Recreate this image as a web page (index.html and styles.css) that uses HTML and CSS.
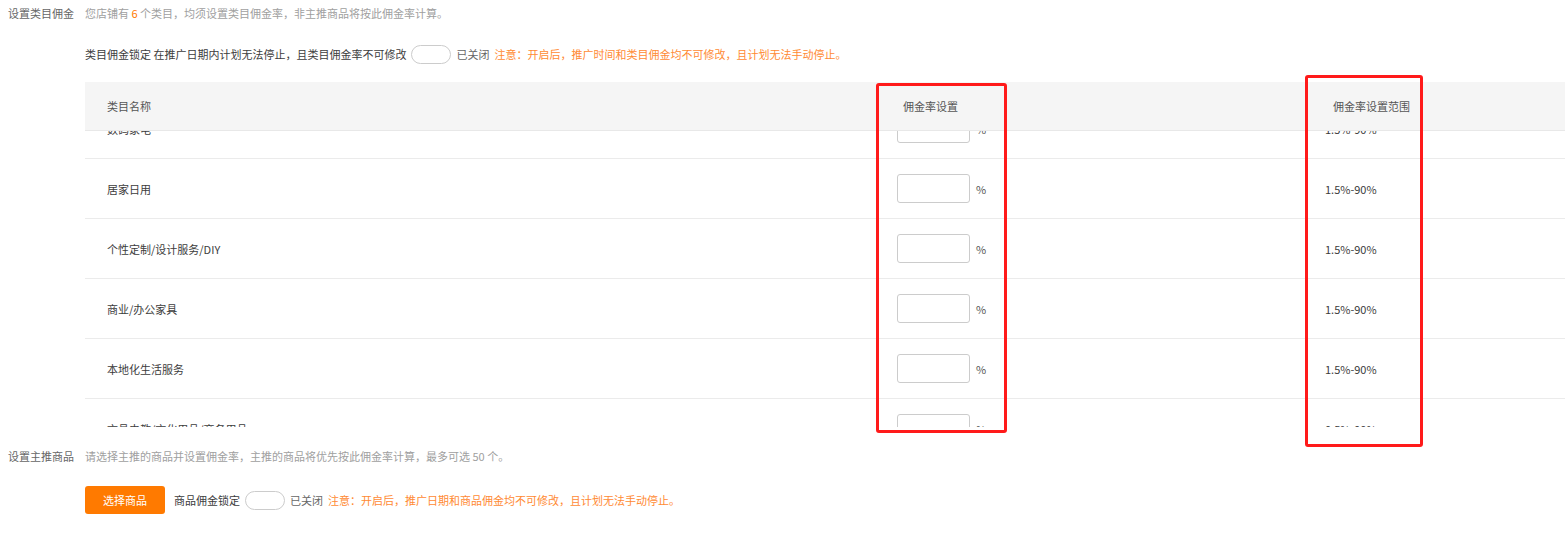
FILE: index.html
```html
<!DOCTYPE html>
<html lang="zh-CN">
<head>
    <meta charset="UTF-8">
    <title>设置佣金</title>
    <link rel="stylesheet" href="styles.css">
</head>
<body>
    <div class="section">
        <div class="row-line">
            <span class="label">设置类目佣金</span>
            <span class="desc">您店铺有 <em>6</em> 个类目，均须设置类目佣金率，非主推商品将按此佣金率计算。</span>
        </div>
        <div class="content">
            <div class="lock-line">
                <span>类目佣金锁定 在推广日期内计划无法停止，且类目佣金率不可修改</span>
                <span class="switch"></span>
                <span class="state">已关闭</span>
                <span class="notice">注意：开启后，推广时间和类目佣金均不可修改，且计划无法手动停止。</span>
            </div>
            <div class="table">
                <div class="thead">
                    <div class="c1">类目名称</div>
                    <div class="c2 th2">佣金率设置</div>
                    <div class="c3 th3">佣金率设置范围</div>
                </div>
                <div class="tbody">
                    <div class="rows">
                        <div class="tr">
                            <div class="c1">数码家电</div>
                            <div class="c2"><input type="text"><span class="pct">%</span></div>
                            <div class="c3">1.5%-90%</div>
                        </div>
                        <div class="tr">
                            <div class="c1">居家日用</div>
                            <div class="c2"><input type="text"><span class="pct">%</span></div>
                            <div class="c3">1.5%-90%</div>
                        </div>
                        <div class="tr">
                            <div class="c1">个性定制/设计服务/DIY</div>
                            <div class="c2"><input type="text"><span class="pct">%</span></div>
                            <div class="c3">1.5%-90%</div>
                        </div>
                        <div class="tr">
                            <div class="c1">商业/办公家具</div>
                            <div class="c2"><input type="text"><span class="pct">%</span></div>
                            <div class="c3">1.5%-90%</div>
                        </div>
                        <div class="tr">
                            <div class="c1">本地化生活服务</div>
                            <div class="c2"><input type="text"><span class="pct">%</span></div>
                            <div class="c3">1.5%-90%</div>
                        </div>
                        <div class="tr">
                            <div class="c1">文具电教/文化用品/商务用品</div>
                            <div class="c2"><input type="text"><span class="pct">%</span></div>
                            <div class="c3">0.5%-90%</div>
                        </div>
                    </div>
                </div>
            </div>
        </div>
    </div>

    <div class="section second">
        <div class="row-line">
            <span class="label">设置主推商品</span>
            <span class="desc">请选择主推的商品并设置佣金率，主推的商品将优先按此佣金率计算，最多可选 50 个。</span>
        </div>
        <div class="content">
            <div class="lock-line btn-line">
                <button class="btn">选择商品</button>
                <span>商品佣金锁定</span>
                <span class="switch"></span>
                <span class="state">已关闭</span>
                <span class="notice">注意：开启后，推广日期和商品佣金均不可修改，且计划无法手动停止。</span>
            </div>
        </div>
    </div>

    <div class="mark mark-rate"></div>
    <div class="mark mark-range"></div>
</body>
</html>
```

FILE: styles.css
```css
body {
    margin: 0;
    font-family: "Noto Sans CJK SC", "Liberation Sans", sans-serif;
    font-size: 11px;
    color: #3c3c3c;
    background: #fff;
    position: relative;
    overflow: hidden;
}
.row-line {
    display: flex;
    align-items: center;
    height: 26px;
}
.label {
    width: 77px;
    padding-left: 8px;
    flex-shrink: 0;
    color: #666;
}
.desc {
    color: #a0a0a0;
}
.desc em {
    font-style: normal;
    color: #ff7a00;
}
.content {
    padding-left: 85px;
}
.lock-line {
    display: flex;
    align-items: center;
    height: 26px;
    margin-top: 15px;
}
.switch {
    display: inline-block;
    width: 38px;
    height: 17px;
    border: 1px solid #ccc;
    border-radius: 10px;
    margin: 0 5px 0 5px;
    background: #fff;
}
.state {
    color: #666;
    margin-right: 5px;
}
.notice {
    color: #ff8a33;
}
.table {
    margin-top: 15px;
}
.thead, .tr {
    display: grid;
    grid-template-columns: 812px 428px 1fr;
    align-items: center;
}
.thead {
    height: 48px;
    background: #f5f5f5;
    border-bottom: 1px solid #e8e8e8;
    color: #555;
    position: relative;
    z-index: 1;
}
.c1 {
    padding-left: 22px;
}
.th2 {
    padding-left: 6px;
}
.th3 {
    padding-left: 8px;
}
.tbody {
    height: 296px;
    overflow: hidden;
}
.rows {
    margin-top: -32px;
}
.tr {
    height: 59px;
    border-bottom: 1px solid #ebebeb;
}
.tr input {
    width: 73px;
    height: 29px;
    box-sizing: border-box;
    border: 1px solid #ccc;
    border-radius: 3px;
    vertical-align: middle;
}
.pct {
    margin-left: 6px;
    color: #555;
    vertical-align: middle;
}
.second {
    margin-top: 16px;
}
.btn-line {
    height: 28px;
    margin-top: 17px;
}
.btn {
    width: 80px;
    height: 28px;
    border: none;
    border-radius: 3px;
    background: #ff7a00;
    color: #fff;
    font-family: inherit;
    font-size: 11px;
    margin-right: 9px;
}
.mark {
    position: absolute;
    border: 3px solid #ff1a1a;
    border-radius: 3px;
    z-index: 5;
}
.mark-rate {
    left: 876px;
    top: 83px;
    width: 125px;
    height: 344px;
}
.mark-range {
    left: 1305px;
    top: 75px;
    width: 112px;
    height: 366px;
}
```
